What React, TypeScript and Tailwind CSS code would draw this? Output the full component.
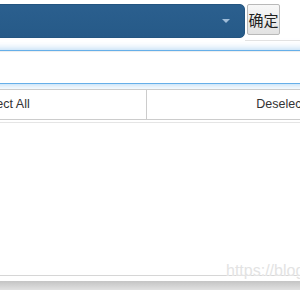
export default function App() {
  return (
    <div className="relative w-[300px] h-[290px] overflow-hidden bg-white font-['Liberation_Sans',Arial,sans-serif] text-[#333]">
      {/* select + confirm button */}
      <div className="flex h-[41px]">
        <div className="mt-[4px] -ml-[10px] w-[255px] h-[34px] shrink-0 rounded-[5px] border border-[#245580] bg-[linear-gradient(#2b5f8e,#265a88)] flex items-center justify-end pr-[14px]">
          <span className="block w-0 h-0 border-t-[4px] border-x-[4px] border-x-transparent border-t-[#9fbcd8]" />
        </div>
        <div className="flex-1 h-full border-b border-[#e2e2e2] pl-[2px] pt-[4px]">
          <button className="w-[33px] h-[31px] border border-[#b9b9b9] rounded-[2px] bg-[linear-gradient(#f8f8f8,#e2e2e2)] text-[15px] leading-none text-[#222] font-['Noto_Sans_CJK_SC',sans-serif] flex items-center justify-center">
            确定
          </button>
        </div>
      </div>

      {/* dropdown panel */}
      <div className="pt-[9px]">
        <div className="-ml-[20px] w-[340px] h-[34px] border border-[#66afe9] bg-white shadow-[inset_0_1px_1px_rgba(0,0,0,0.075),0_0_8px_rgba(102,175,233,0.6)]" />

        <div className="mt-[5px] -ml-[139px] w-[572px] h-[31px] flex">
          <button className="w-1/2 h-full border border-[#ccc] bg-white text-[12.5px] text-[#333]">
            Select All
          </button>
          <button className="w-1/2 h-full -ml-px border border-[#ccc] bg-white text-[12.5px] text-[#333]">
            Deselect All
          </button>
        </div>

        <div className="mt-[2px] border-t border-[#e5e5e5] h-[153px]" />
        <div className="border-t border-[#d6d6d6] h-[6px]" />
        <div className="h-[10px] bg-[linear-gradient(#c4c4c4,#e4e4e4)]" />
      </div>

      <span className="absolute left-[226px] top-[259px] text-[16px] text-[#e3e3e3] [text-shadow:0_0_1px_#fff] whitespace-nowrap">
        https://blog
      </span>
    </div>
  );
}
